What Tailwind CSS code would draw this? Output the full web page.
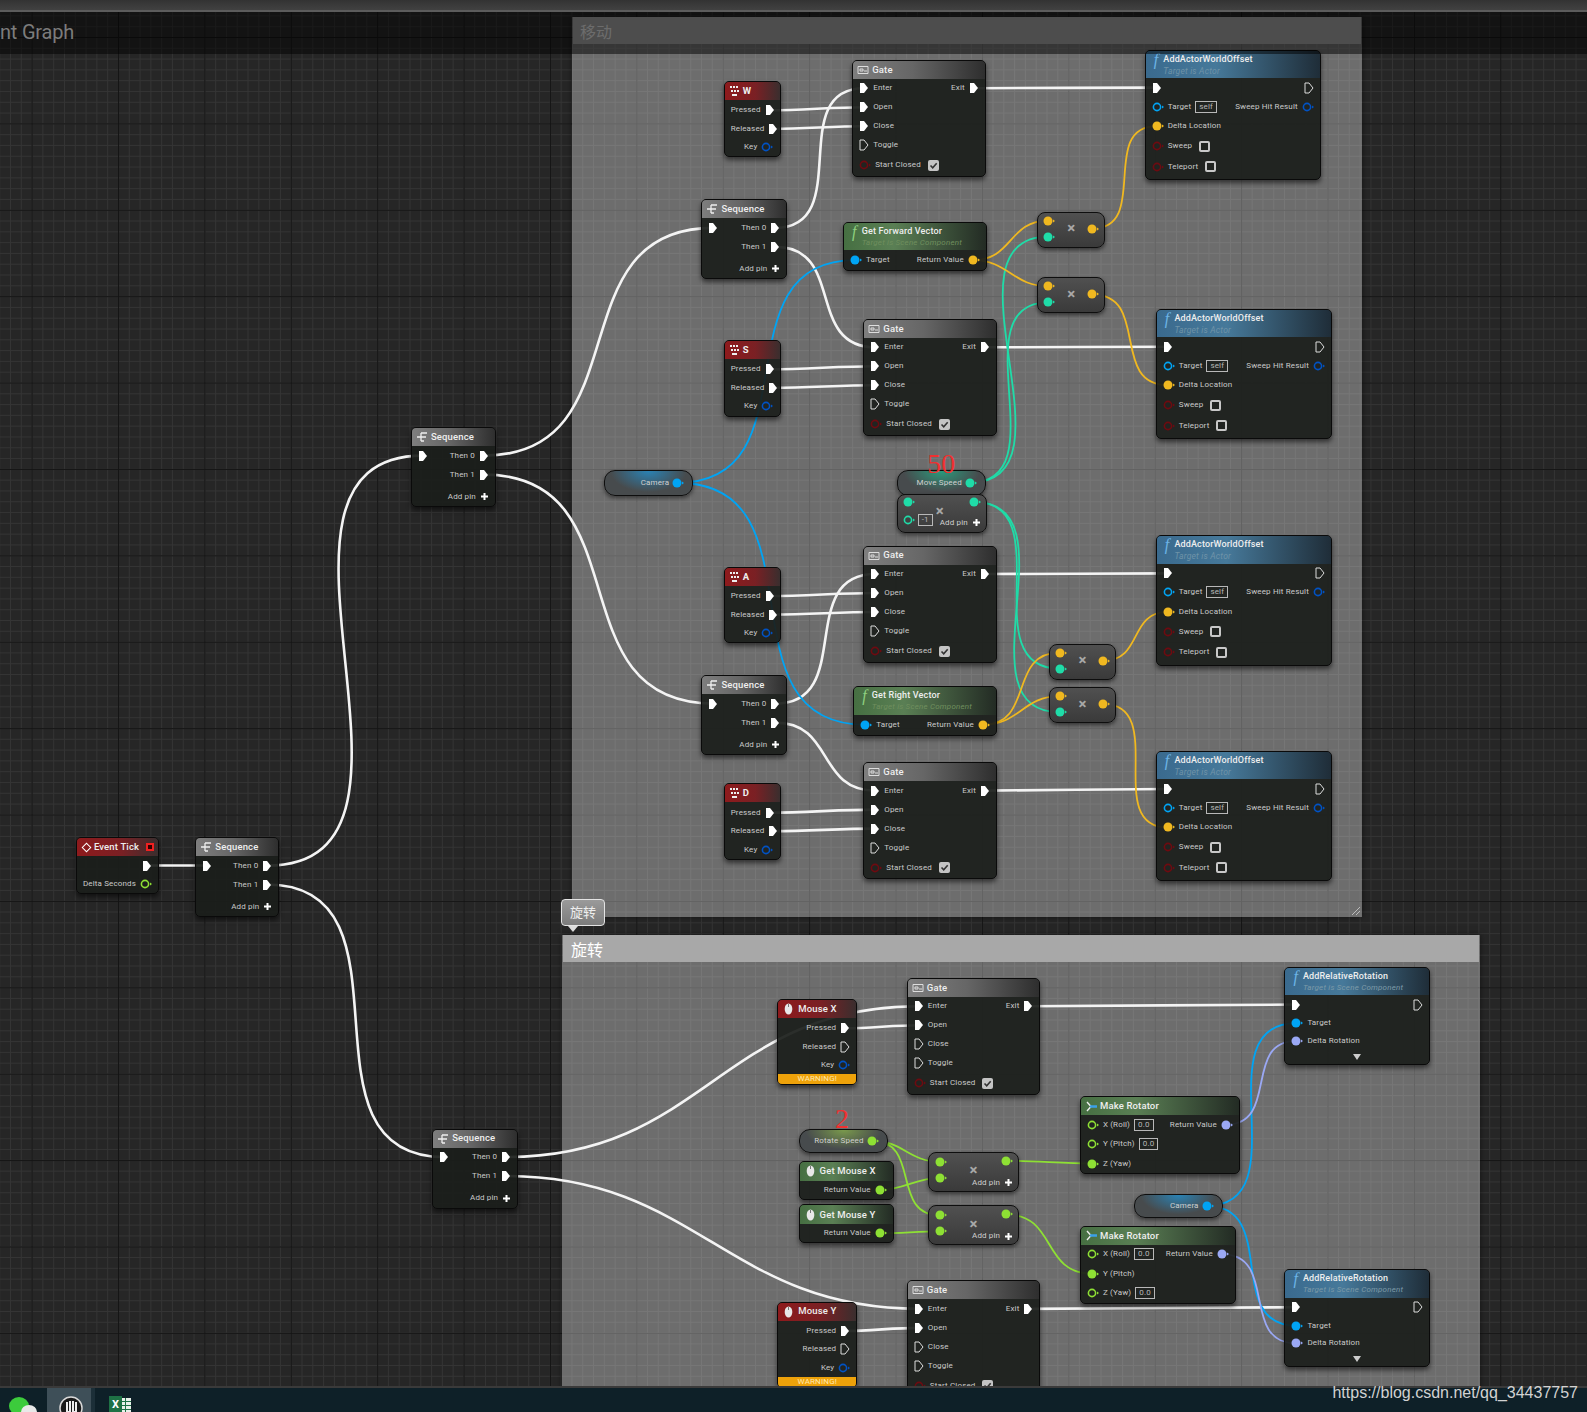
<!DOCTYPE html>
<html lang="zh">
<head>
  <meta charset="UTF-8" />
  <title>Event Graph</title>
  <script src="https://cdn.jsdelivr.net/npm/@tailwindcss/browser@4"></script>
</head>
<body class="bg-[#262626]">
<div class="relative flex flex-col w-[1587px] h-[1412px] overflow-hidden font-['Roboto','Noto_Sans_CJK_SC',sans-serif]">
  <!-- top bar -->
  <div class="h-[12px] shrink-0 bg-[linear-gradient(#333,#414141)] border-b-2 border-[#5c5c5c]"></div>

  <!-- graph -->
  <div id="graph" class="relative flex-1 overflow-hidden bg-[#262626] bg-[linear-gradient(#141414_1px,transparent_1px),linear-gradient(90deg,#141414_1px,transparent_1px),linear-gradient(#343434_1px,transparent_1px),linear-gradient(90deg,#343434_1px,transparent_1px)] bg-size-[86.4px_86.4px,86.4px_86.4px,10.8px_10.8px,10.8px_10.8px] bg-position-[31.6px_25px,31.6px_25px,10px_3.4px,10px_3.4px]">

    <!-- comment boxes -->
    <div class="absolute left-[572px] top-[5px] w-[790px] h-[900px] bg-white/33 shadow-[0_0_6px_rgba(0,0,0,.5)]">
      <div class="h-[27px] mx-[1px] bg-[#9a9a9a] pl-[7px] text-[16px] leading-[31px] text-[#d8d8d8]">移动</div>
      <svg class="absolute right-[1px] bottom-[1px]" width="10" height="10"><path d="M1 9L9 1M5 9L9 5" stroke="#bbb" fill="none"/></svg>
    </div>
    <div class="absolute left-[562px] top-[923px] w-[918px] h-[480px] bg-white/33 shadow-[0_0_6px_rgba(0,0,0,.5)]">
      <div class="h-[27px] mx-[1px] bg-[#a8a8a8] pl-[8px] text-[16px] leading-[31px] text-white">旋转</div>
    </div>

    <svg id="wires" class="absolute inset-0 w-full h-full" fill="none"></svg>
    <div id="nodes"></div>

    <!-- darkened title band -->
    <div class="absolute left-0 top-0 w-full h-[42px] bg-black/50 pointer-events-none">
      <span class="absolute left-0 top-[8px] text-[20px] leading-[24px] text-[#7c7c7c] tracking-[-.2px]">nt Graph</span>
    </div>

    <!-- comment bubble -->
    <div class="absolute left-[561px] top-[887px] w-[44px] h-[27px] rounded-[4px] border border-[#e4e4e4] bg-[linear-gradient(#9a9a9a,#7c7c7c)] text-center text-[13px] leading-[25px] text-[#eee]">旋转</div>
    <div class="absolute left-[568px] top-[914px] w-0 h-0 border-x-[5px] border-x-transparent border-t-[6px] border-t-[#ddd]"></div>
  </div>

  <!-- taskbar -->
  <div class="relative h-[26px] shrink-0 overflow-hidden border-t-2 border-[#3a3a3a] bg-[#0e2028] flex items-start">
    <svg class="absolute left-[9px] top-[8px]" width="28" height="24"><ellipse cx="10" cy="10" rx="10" ry="9" fill="#3ccb3c"/><ellipse cx="20" cy="16" rx="8" ry="7" fill="#e8e8e8"/></svg>
    <div class="absolute left-[47px] top-0 w-[44px] h-[26px] bg-[#3e4f58]"></div>
    <div class="absolute left-[91px] top-0 w-[4px] h-[26px] bg-[#1c2f38]"></div>
    <svg class="absolute left-[59px] top-[8px]" width="24" height="24"><circle cx="12" cy="12" r="11" fill="#1a1a1a" stroke="#d8d8d8" stroke-width="1.5"/><path d="M8 6v10h3V5M14 5v11h3V6" stroke="#eee" stroke-width="2" fill="none"/></svg>
    <svg class="absolute left-[120px] top-[10px]" width="11" height="18"><rect width="11" height="18" fill="#e8f0ea"/><path d="M0 3.5h11M0 7.5h11M0 11.5h11M5.5 0v18" stroke="#1e7145"/></svg>
    <div class="absolute left-[109px] top-[8px] w-[13px] h-[20px] bg-[#1e7145] text-center text-[11px] leading-[18px] font-bold text-white">X</div>
  </div>
  <!-- watermark lies over the taskbar's top edge -->
  <div class="absolute right-[9px] top-[1383px] text-[16px] leading-[20px] text-[#d2d2d2] font-['Liberation_Sans',sans-serif]">https://blog.csdn.net/qq_34437757</div>
</div>

<script>
  // data below is in the coordinates of the shrunk picture, k brings it to full size
  const k = 1587 / 1568;
  const WHITE = '#f4f4f4', BLUE = '#00a4f4', DBLUE = '#0052c4', RED = '#6e0a10', YEL = '#f0b820',
        TEAL = '#1fdca8', LIME = '#8ee034', LAV = '#9aa8f4';
  let html = '';

  const NODE = 'rounded-[5px] border border-[#0a0a0a] bg-[#1b1e1b]/93 shadow-[0_3px_5px_rgba(0,0,0,.55)] overflow-hidden text-[8px] tracking-[.15px] text-[#cacaca]';
  const GRAY = 'bg-[linear-gradient(90deg,#7e7e7e,#666_45%,#2e2e2e)]';
  const REDH = 'bg-[linear-gradient(90deg,#8e1a1c,#7a2024_55%,#3a2e2e)]';
  const BLUEH = 'bg-[linear-gradient(90deg,#3a6a8e,#46799a_40%,#1f2d38)]';
  const GREENH = 'bg-[linear-gradient(90deg,#466f42,#5a7f54_35%,#232b24)]';

  function node(cls, x, y, w, inner) {
    html += `<div class="absolute ${cls}" style="left:${x * k}px;top:${y * k - 12}px;width:${w * k}px">${inner}</div>`;
  }

  // pins
  const E = id => `<svg data-p="${id}" class="shrink-0" width="10" height="12"><path d="M1 1h4l4 5-4 5H1z" fill="#fff"/></svg>`;
  const Eo = () => `<svg class="shrink-0" width="10" height="12"><path d="M1 1h4l4 5-4 5H1z" fill="none" stroke="#ddd"/></svg>`;
  const D = (id, c) => `<svg data-p="${id}" class="shrink-0" width="12" height="10"><circle cx="5" cy="5" r="4.5" fill="${c}"/><path d="M10 3.5l2 1.5-2 1.5z" fill="${c}"/></svg>`;
  const Do = c => `<svg class="shrink-0" width="12" height="10"><circle cx="5" cy="5" r="3.6" fill="none" stroke="${c}" stroke-width="1.6"/><path d="M10 3.5l2 1.5-2 1.5z" fill="${c}"/></svg>`;
  const PLUS = `<svg class="shrink-0" width="9" height="9"><path d="M4.5 1v7M1 4.5h7" stroke="#fff" stroke-width="2"/></svg>`;

  const L = t => `<span class="whitespace-nowrap">${t}</span>`;
  const CHK = `<span class="w-[11px] h-[11px] ml-[3px] rounded-[2px] border-2 border-[#c8c8c8]"></span>`;
  const CHKON = `<svg class="ml-[3px]" width="11" height="11"><rect width="11" height="11" rx="2" fill="#c4c4c4"/><path d="M2.5 5.5l2.2 2.3 4-4.6" stroke="#333" stroke-width="1.6" fill="none"/></svg>`;
  const BOX = t => `<span class="px-[3px] border border-[#b8b8b8] text-[8px] leading-[10px] text-[#b8b8b8]">${t}</span>`;

  const row = (l, r, cls) => `<div class="flex items-center justify-between px-[6px] ${cls || 'h-[19px]'}"><div class="flex items-center gap-[4px]">${l}</div><div class="flex items-center gap-[4px]">${r || ''}</div></div>`;

  // header icons
  const I_SEQ = `<svg width="12" height="10"><path d="M5 1v8M1 5h4M5 1h6M5 5h5M5 9h3" stroke="#eee" stroke-width="1.3" fill="none"/></svg>`;
  const I_GATE = `<svg width="12" height="10"><path d="M1 1.5h10v7H1zM3 4h3v2H3zM7 6h3" stroke="#ddd" fill="none"/></svg>`;
  const I_KEY = `<svg width="11" height="12"><path d="M1 1h2v2H1zM4 1h2v2H4zM7 1h2v2H7zM2 5h2v2H2zM5 5h2v2H5zM8 5h2v2H8zM3 9h5v2H3z" fill="#eee"/></svg>`;
  const I_MOUSE = `<svg class="ml-[2px] mr-[2px]" width="9" height="12"><ellipse cx="4.5" cy="6" rx="3.8" ry="5.5" fill="#e8e8e8"/><path d="M4.5 1v3" stroke="#777"/></svg>`;
  const I_ROT = `<svg width="12" height="11"><path d="M2 1l4 4.5L2 10" stroke="#eee" stroke-width="1.4" fill="none"/><path d="M5 5.5h7" stroke="#3aa0e8" stroke-width="2.4"/></svg>`;
  const I_F = c => `<span class="font-['Liberation_Serif',serif] italic text-[16px] leading-[15px] ${c}">f</span>`;

  const head = (bg, icon, title, cls) => `<div class="${cls || 'h-[18px]'} ${bg} flex items-center gap-[3px] pl-[4px] text-[9.5px] font-medium text-[#eee]">${icon}<span class="whitespace-nowrap">${title}</span></div>`;
  const head2 = (bg, fc, title, sub, subc, subsize) => `<div class="h-[27.5px] ${bg} flex gap-[5px] pl-[8px] pt-[1px] text-[9px] font-medium text-[#eee]">${I_F(fc)}<div><div class="leading-[14px] whitespace-nowrap">${title}</div><div class="${subsize} leading-[10px] italic font-normal tracking-[.2px] whitespace-nowrap ${subc}">${sub}</div></div></div>`;

  // node kinds
  function seq(id, x, y, w) {
    node(NODE, x, y, w || 84, head(GRAY, I_SEQ, 'Sequence') +
      row(E(id + '.in'), L('Then 0') + E(id + '.t0')) +
      row('', L('Then 1') + E(id + '.t1')) +
      row('', L('Add pin') + PLUS, 'h-[19px] mt-[3px]'));
  }
  function gate(id, x, y, hollow) {
    node(NODE, x, y, 132, head(GRAY, I_GATE, 'Gate') +
      row(E(id + '.enter') + L('Enter'), L('Exit') + E(id + '.exit')) +
      row(E(id + '.open') + L('Open')) +
      row((hollow ? Eo() : E(id + '.close')) + L('Close')) +
      row(Eo() + L('Toggle')) +
      row(Do(RED) + L('Start Closed') + CHKON, '', 'h-[21px]'));
  }
  function keyNode(id, x, y, title) {
    node(NODE, x, y, 57, head(REDH, I_KEY, `<b>${title}</b>`) + '<div class="h-[1px]"></div>' +
      row('', L('Pressed') + E(id + '.p'), 'h-[18.5px] pr-[7px]') +
      row('', L('Released') + E(id + '.r'), 'h-[18.5px] pr-[7px]') +
      row('', L('Key') + Do(DBLUE), 'h-[18.5px] pr-[7px]'));
  }
  function mouseNode(id, x, y, title) {
    node(NODE, x, y, 79, head(REDH, I_MOUSE, title) + '<div class="h-[1px]"></div>' +
      row('', L('Pressed') + E(id + '.p'), 'h-[18.5px]') +
      row('', L('Released') + Eo(), 'h-[18.5px]') +
      row('', L('Key') + Do(DBLUE), 'h-[18.5px]') +
      '<div class="h-[10px] bg-[#eea20a] text-center text-[8px] leading-[10px] text-[#ffe9b0]">WARNING!</div>');
  }
  function addOffset(id, x, y) {
    node(NODE, x, y, 174, head2(BLUEH, 'text-[#6db4e6]', 'AddActorWorldOffset', 'Target is Actor', 'text-[#6f93a8]', 'text-[8.5px]') +
      row(E(id + '.in'), Eo(), 'h-[19px]') +
      row(Do(BLUE) + L('Target') + BOX('self'), L('Sweep Hit Result') + Do(DBLUE)) +
      row(D(id + '.d', YEL) + L('Delta Location'), '', 'h-[20px]') +
      row(Do(RED) + L('Sweep') + CHK, '', 'h-[20px]') +
      row(Do(RED) + L('Teleport') + CHK, '', 'h-[21px] mb-[2px]'));
  }
  function addRot(id, x, y) {
    node(NODE, x, y, 144, head2(BLUEH, 'text-[#6db4e6]', 'AddRelativeRotation', 'Target is Scene Component', 'text-[#7c9aa8]', 'text-[8px]') +
      row(E(id + '.in'), Eo(), 'h-[19px]') +
      row(D(id + '.t', BLUE) + L('Target'), '', 'h-[18px]') +
      row(D(id + '.d', LAV) + L('Delta Rotation'), '', 'h-[17.5px]') +
      `<div class="flex justify-center h-[14px] items-center"><svg width="8" height="6"><path d="M0 0h8L4 6z" fill="#ccc"/></svg></div>`);
  }
  function getVec(id, x, y, title) {
    node(NODE, x, y, 142, head2(GREENH, 'text-[#8fd080]', title, 'Target is Scene Component', 'text-[#6f8f5e]', 'text-[8px]') +
      row(D(id + '.t', BLUE) + L('Target'), L('Return Value') + D(id + '.r', YEL), 'h-[20px]'));
  }
  function rotator(id, x, y, w, conn) {
    const r = (name, wired) => wired ? D(id + '.' + name[0].toLowerCase(), LIME) + L(name) : Do(LIME) + L(name) + BOX('0.0');
    node(NODE, x, y, w, head(GREENH, I_ROT, 'Make Rotator') +
      row(r('X (Roll)', false), L('Return Value') + D(id + '.r', LAV)) +
      row(r('Y (Pitch)', conn == 'y'), '', 'h-[20px]') +
      row(r('Z (Yaw)', conn == 'z'), ''));
  }
  function getMouse(id, x, y, title) {
    node(NODE, x, y, 94, head(GREENH, I_MOUSE, title, 'h-[19px]') +
      row('', L('Return Value') + D(id + '.r', LIME), 'h-[18px]'));
  }
  const PILL = 'rounded-[11px] border border-[#0e0e0e] shadow-[0_2px_4px_rgba(0,0,0,.5)] overflow-hidden text-[8px] tracking-[.15px] text-[#cfcfcf]';
  function pill(id, x, y, h, label, bg, c) {
    node(`${PILL} ${bg}`, x, y, 88, `<div class="flex items-center justify-end gap-[3px] pr-[8px]" style="height:${h * k}px">${L(label)}${D(id, c)}</div>`);
  }
  const MULT = 'rounded-[8px] border border-[#0e0e0e] bg-[linear-gradient(#505050,#3a3a3a)] shadow-[0_2px_4px_rgba(0,0,0,.55)] overflow-hidden text-[8px] tracking-[.15px] text-[#d0d0d0]';
  const TIMES = `<span class="absolute left-1/2 top-[45%] -translate-x-1/2 -translate-y-1/2 text-[15px] leading-[15px] font-bold text-[#a8a8a8]">×</span>`;
  function mult(id, x, y, c) {
    node(MULT, x, y, 67, `<div class="h-[34px] flex items-center justify-between pl-[5px] pr-[5px] pb-[2px]"><div class="flex flex-col gap-[6px]">${D(id + '.a', c)}${D(id + '.b', TEAL)}</div>${TIMES}${D(id + '.o', c)}</div>`);
  }
  function multAdd(id, x, y) {
    node(MULT, x, y, 90, `<div class="h-[38px] flex justify-between pl-[6px] pr-[5px] pt-[3px]"><div class="flex flex-col gap-[6px] pt-[1px]">${D(id + '.a', LIME)}${D(id + '.b', LIME)}</div>${TIMES}<div class="flex flex-col items-end gap-[11px]">${D(id + '.o', LIME)}<div class="flex items-center gap-[4px]">${L('Add pin')}${PLUS}</div></div></div>`);
  }

  // event graph
  node(NODE, 75, 827, 82, `<div class="h-[18px] ${REDH} flex items-center gap-[4px] pl-[6px] pr-[4px] text-[9.5px] font-medium text-[#eee]"><span class="w-[7px] h-[7px] rotate-45 border border-white"></span><span class="flex-1 whitespace-nowrap">Event Tick</span><span class="w-[8px] h-[8px] border-2 border-[#f02020] bg-[#300]"></span></div>` +
    row('', E('tick.o')) + row('', L('Delta Seconds') + Do(LIME), 'h-[18px]'));

  seq('s1', 193, 827, 83);
  seq('s2', 406, 422);
  seq('s3', 693, 197, 85);
  seq('s4', 693, 667, 85);
  seq('s5', 427, 1115, 85);

  keyNode('w', 715, 80, 'W');
  keyNode('s', 715, 336, 'S');
  keyNode('a', 715, 560, 'A');
  keyNode('d', 715, 774, 'D');

  gate('g1', 842, 59);
  gate('g2', 853, 315);
  gate('g3', 853, 539);
  gate('g4', 853, 753);
  gate('g5', 896, 966, true);
  gate('g6', 896, 1265, true);

  addOffset('a1', 1131, 49);
  addOffset('a2', 1142, 305);
  addOffset('a3', 1142, 529);
  addOffset('a4', 1142, 742);

  getVec('gf', 833, 219, 'Get Forward Vector');
  getVec('gr', 843, 678, 'Get Right Vector');

  mult('m1', 1025, 209, YEL);
  mult('m2', 1025, 274, YEL);
  mult('m3', 1036, 636, YEL);
  mult('m4', 1036, 679, YEL);

  const CAMBG = 'bg-[radial-gradient(ellipse_at_50%_0%,#2a82b4,#474b4d_62%)]';
  pill('cam', 597, 464, 24, 'Camera', CAMBG, BLUE);
  pill('speed', 886, 464, 24, 'Move Speed', 'bg-[radial-gradient(ellipse_at_50%_0%,#2a9a7c,#474b4d_62%)]', TEAL);
  pill('cam2', 1120, 1180, 21, 'Camera', CAMBG, BLUE);
  pill('rs', 789, 1115, 22, 'Rotate Speed', 'bg-[radial-gradient(ellipse_at_50%_0%,#7a9a4c,#474b4d_62%)]', LIME);

  // the -1 multiply under Move Speed
  node(MULT, 886, 488, 89, `<div class="h-[37px] flex flex-col px-[5px] pt-[2px]"><div class="flex justify-between">${D('neg.a', TEAL)}${D('neg.o', TEAL)}</div>
    <div class="flex items-center gap-[3px] mt-[5px]">${Do(TEAL)}${BOX('-1')}<div class="flex items-center gap-[4px] ml-auto pt-[5px]">${L('Add pin')}${PLUS}</div></div></div>
    <span class="absolute left-[38px] top-[9px] text-[15px] leading-[15px] font-bold text-[#a8a8a8]">×</span>`);

  mouseNode('mx', 768, 987, 'Mouse X');
  mouseNode('my', 768, 1286, 'Mouse Y');
  getMouse('gx', 789, 1147, 'Get Mouse X');
  getMouse('gy', 789, 1190, 'Get Mouse Y');
  multAdd('n1', 917, 1138);
  multAdd('n2', 917, 1191);
  rotator('r1', 1067, 1083, 158, 'z');
  rotator('r2', 1067, 1211, 154, 'y');
  addRot('ar1', 1269, 955);
  addRot('ar2', 1269, 1254);

  // the red numbers written on the picture
  node("font-['Liberation_Serif',serif] text-[28px] leading-[28px] text-[#f03030] text-center", 905, 445, 50, '50');
  node("font-['Liberation_Serif',serif] text-[28px] leading-[28px] text-[#f03030] text-center", 807, 1092, 50, '2');

  document.getElementById('nodes').innerHTML = html;

  // wires: [from pin, to pin, colour, tangent override]
  const wires = [
    ['tick.o', 's1.in'], ['s1.t0', 's2.in'], ['s1.t1', 's5.in'], ['s2.t0', 's3.in'], ['s2.t1', 's4.in'],
    ['s3.t0', 'g1.enter'], ['s3.t1', 'g2.enter'], ['s4.t0', 'g3.enter'], ['s4.t1', 'g4.enter'],
    ['w.p', 'g1.open'], ['w.r', 'g1.close'], ['s.p', 'g2.open'], ['s.r', 'g2.close'],
    ['a.p', 'g3.open'], ['a.r', 'g3.close'], ['d.p', 'g4.open'], ['d.r', 'g4.close'],
    ['g1.exit', 'a1.in'], ['g2.exit', 'a2.in'], ['g3.exit', 'a3.in'], ['g4.exit', 'a4.in'],
    ['s5.t0', 'g5.enter'], ['s5.t1', 'g6.enter'], ['mx.p', 'g5.open'], ['my.p', 'g6.open'],
    ['g5.exit', 'ar1.in'], ['g6.exit', 'ar2.in'],
    ['cam', 'gf.t', BLUE], ['cam', 'gr.t', BLUE], ['cam2', 'ar1.t', BLUE], ['cam2', 'ar2.t', BLUE],
    ['speed', 'm1.b', TEAL], ['speed', 'm2.b', TEAL], ['speed', 'neg.a', TEAL, 8], ['neg.o', 'm3.b', TEAL], ['neg.o', 'm4.b', TEAL],
    ['gf.r', 'm1.a', YEL], ['gf.r', 'm2.a', YEL], ['m1.o', 'a1.d', YEL], ['m2.o', 'a2.d', YEL],
    ['gr.r', 'm3.a', YEL], ['gr.r', 'm4.a', YEL], ['m3.o', 'a3.d', YEL], ['m4.o', 'a4.d', YEL],
    ['rs', 'n1.a', LIME], ['rs', 'n2.a', LIME], ['gx.r', 'n1.b', LIME], ['gy.r', 'n2.b', LIME],
    ['n1.o', 'r1.z', LIME], ['n2.o', 'r2.y', LIME], ['r1.r', 'ar1.d', LAV], ['r2.r', 'ar2.d', LAV]
  ];

  const graph = document.getElementById('graph');
  function drawWires() {
    const origin = graph.getBoundingClientRect();
    const pinAt = id => {
      const r = document.querySelector(`[data-p="${id}"]`).getBoundingClientRect();
      return [r.left - origin.left + 5, r.top - origin.top + r.height / 2];
    };
    let paths = '';
    for (const [a, b, c, t] of wires) {
      const [x1, y1] = pinAt(a), [x2, y2] = pinAt(b);
      const d = t || Math.max(10, 0.35 * (Math.abs(x2 - x1) + Math.abs(y2 - y1)));
      paths += `<path d="M${x1} ${y1}C${x1 + d} ${y1} ${x2 - d} ${y2} ${x2} ${y2}" stroke="${c || WHITE}" stroke-width="${c ? 1.8 : 2.6}"/>`;
    }
    document.getElementById('wires').innerHTML = paths;
  }
  // the stylesheet may land after this script has run, so measure again once it has
  drawWires();
  window.addEventListener('load', drawWires);
  new ResizeObserver(drawWires).observe(graph);
</script>
</body>
</html>
